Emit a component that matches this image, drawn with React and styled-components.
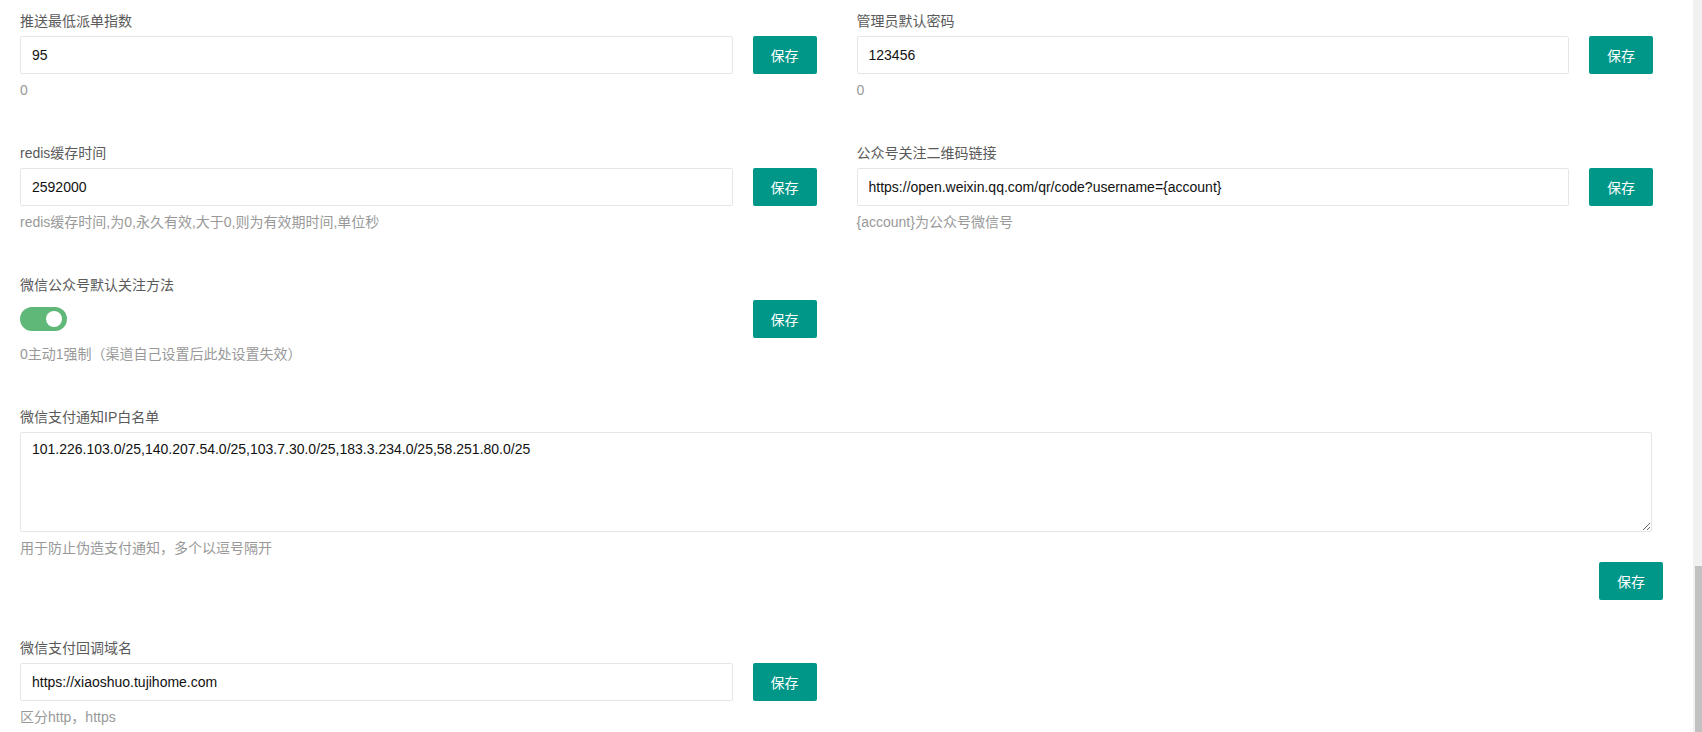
import React from "react";
import styled, { createGlobalStyle } from "styled-components";

const GlobalStyle = createGlobalStyle`
  html, body {
    margin: 0;
    padding: 0;
    background: #fff;
    overflow: hidden;
  }
  body {
    font-family: "Liberation Sans", Arial, "Noto Sans CJK SC", sans-serif;
    font-size: 14px;
    color: #333;
  }
  * { box-sizing: border-box; }
`;

const Page = styled.div`
  display: flex;
  height: 732px;
  width: 1702px;
  overflow: hidden;
`;

const Main = styled.main`
  flex: 1;
  padding: 11px 0 0 20px;
  display: grid;
  grid-template-columns: 1fr 1fr;
  align-content: start;
`;

const Item = styled.div`
  grid-column: ${(p) => (p.$full ? "1 / -1" : "auto")};
  padding-right: ${(p) => (p.$full ? "41px" : "40px")};
  padding-bottom: ${(p) => (p.$last ? "0" : "43px")};
  min-width: 0;
`;

const Label = styled.div`
  line-height: 20px;
  height: 20px;
  margin-bottom: 5px;
  color: #5a5a5a;
  font-size: 14px;
  white-space: nowrap;
`;

const FieldRow = styled.div`
  display: flex;
  align-items: center;
  gap: 20px;
  height: 38px;
`;

const TextInput = styled.input`
  flex: 1;
  min-width: 0;
  height: 38px;
  border: 1px solid #e6e6e6;
  border-radius: 2px;
  padding: 0 11px;
  font-family: inherit;
  font-size: 14px;
  color: #111;
  background: #fff;
  outline: none;
`;

const TextArea = styled.textarea`
  display: block;
  width: 100%;
  height: 100px;
  border: 1px solid #e6e6e6;
  border-radius: 2px;
  padding: 6px 11px;
  font-family: inherit;
  font-size: 14px;
  line-height: 20px;
  color: #111;
  background: #fff;
  outline: none;
  resize: both;
`;

const SaveButton = styled.button`
  flex: none;
  width: 64px;
  height: 38px;
  padding: 0;
  border: none;
  border-radius: 2px;
  background: #009688;
  color: #fff;
  font-family: inherit;
  font-size: 14px;
  cursor: pointer;
`;

const SwitchSlot = styled.div`
  flex: 1;
  display: flex;
  align-items: center;
`;

const Switch = styled.span`
  position: relative;
  display: inline-block;
  width: 47px;
  height: 24px;
  border-radius: 12px;
  background: ${(p) => (p.$on ? "#5fb878" : "#d2d2d2")};
`;

const Knob = styled.span`
  position: absolute;
  top: 4px;
  ${(p) => (p.$on ? "right: 5px;" : "left: 5px;")}
  width: 16px;
  height: 16px;
  border-radius: 50%;
  background: #fff;
`;

const Help = styled.div`
  margin-top: 6px;
  line-height: 20px;
  height: 20px;
  color: #999;
  font-size: 14px;
  white-space: nowrap;
`;

const ActionRow = styled.div`
  grid-column: 1 / -1;
  display: flex;
  justify-content: flex-end;
  padding: 4px 30px 38px 0;
`;

const ScrollTrack = styled.div`
  flex: none;
  width: 9px;
  background: #f1f1f1;
  display: flex;
  flex-direction: column;
  justify-content: flex-end;
  align-items: flex-end;
`;

const ScrollThumb = styled.div`
  width: 7px;
  height: 166px;
  background: #c1c1c1;
`;

function InputField({ label, value, help }) {
  return (
    <Item>
      <Label>{label}</Label>
      <FieldRow>
        <TextInput defaultValue={value} />
        <SaveButton>保存</SaveButton>
      </FieldRow>
      <Help>{help}</Help>
    </Item>
  );
}

export default function App() {
  return (
    <>
      <GlobalStyle />
      <Page>
        <Main>
          <InputField label="推送最低派单指数" value="95" help="0" />
          <InputField label="管理员默认密码" value="123456" help="0" />
          <InputField
            label="redis缓存时间"
            value="2592000"
            help="redis缓存时间,为0,永久有效,大于0,则为有效期时间,单位秒"
          />
          <InputField
            label="公众号关注二维码链接"
            value="https://open.weixin.qq.com/qr/code?username={account}"
            help="{account}为公众号微信号"
          />
          <Item>
            <Label>微信公众号默认关注方法</Label>
            <FieldRow>
              <SwitchSlot>
                <Switch $on role="switch" aria-checked="true">
                  <Knob $on />
                </Switch>
              </SwitchSlot>
              <SaveButton>保存</SaveButton>
            </FieldRow>
            <Help>0主动1强制（渠道自己设置后此处设置失效）</Help>
          </Item>
          <Item />
          <Item $full $last>
            <Label>微信支付通知IP白名单</Label>
            <TextArea defaultValue="101.226.103.0/25,140.207.54.0/25,103.7.30.0/25,183.3.234.0/25,58.251.80.0/25" />
            <Help>用于防止伪造支付通知，多个以逗号隔开</Help>
          </Item>
          <ActionRow>
            <SaveButton>保存</SaveButton>
          </ActionRow>
          <InputField
            label="微信支付回调域名"
            value="https://xiaoshuo.tujihome.com"
            help="区分http，https"
          />
        </Main>
        <ScrollTrack>
          <ScrollThumb />
        </ScrollTrack>
      </Page>
    </>
  );
}
